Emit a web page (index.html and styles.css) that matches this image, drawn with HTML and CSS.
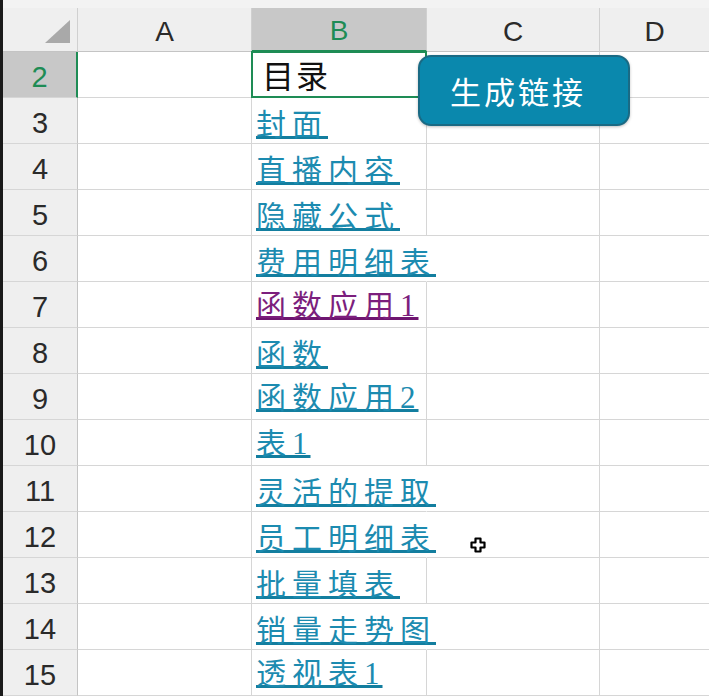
FILE: index.html
```html
<!DOCTYPE html>
<html lang="zh-CN">
<head>
  <meta charset="UTF-8">
  <meta name="viewport" content="width=device-width, initial-scale=1.0">
  <title>目录</title>
  <link rel="stylesheet" href="styles.css">
</head>
<body>
  <div class="sheet">
    <div class="top-strip"></div>

    <div class="grid">
      <!-- Column headers -->
      <div class="corner"><span class="corner-tri"></span></div>
      <div class="col-head">A</div>
      <div class="col-head active">B</div>
      <div class="col-head">C</div>
      <div class="col-head last">D</div>

      <!-- Row 2 -->
      <div class="row-head active">2</div>
      <div class="cell"></div>
      <div class="cell selected"><span class="title">目录</span></div>
      <div class="cell"></div>
      <div class="cell last"></div>

      <div class="row-head">3</div>
      <div class="cell"></div>
      <div class="cell"><a class="link" href="#">封面</a></div>
      <div class="cell"></div>
      <div class="cell last"></div>

      <div class="row-head">4</div>
      <div class="cell"></div>
      <div class="cell"><a class="link" href="#">直播内容</a></div>
      <div class="cell"></div>
      <div class="cell last"></div>

      <div class="row-head">5</div>
      <div class="cell"></div>
      <div class="cell"><a class="link" href="#">隐藏公式</a></div>
      <div class="cell"></div>
      <div class="cell last"></div>

      <div class="row-head">6</div>
      <div class="cell"></div>
      <div class="cell spill"><a class="link" href="#">费用明细表</a></div>
      <div class="cell"></div>
      <div class="cell last"></div>

      <div class="row-head">7</div>
      <div class="cell"></div>
      <div class="cell"><a class="link visited" href="#">函数应用<span class="num">1</span></a></div>
      <div class="cell"></div>
      <div class="cell last"></div>

      <div class="row-head">8</div>
      <div class="cell"></div>
      <div class="cell"><a class="link" href="#">函数</a></div>
      <div class="cell"></div>
      <div class="cell last"></div>

      <div class="row-head">9</div>
      <div class="cell"></div>
      <div class="cell"><a class="link" href="#">函数应用<span class="num">2</span></a></div>
      <div class="cell"></div>
      <div class="cell last"></div>

      <div class="row-head">10</div>
      <div class="cell"></div>
      <div class="cell"><a class="link" href="#">表<span class="num">1</span></a></div>
      <div class="cell"></div>
      <div class="cell last"></div>

      <div class="row-head">11</div>
      <div class="cell"></div>
      <div class="cell spill"><a class="link" href="#">灵活的提取</a></div>
      <div class="cell"></div>
      <div class="cell last"></div>

      <div class="row-head">12</div>
      <div class="cell"></div>
      <div class="cell spill"><a class="link" href="#">员工明细表</a></div>
      <div class="cell cursor-cell">
        <svg class="cursor" width="16" height="16" viewBox="0 0 16 16">
          <path d="M5.5 1.5h5v4h4v5h-4v4h-5v-4h-4v-5h4z" fill="#fff" stroke="#000" stroke-width="2.2" stroke-linejoin="round"/>
        </svg>
      </div>
      <div class="cell last"></div>

      <div class="row-head">13</div>
      <div class="cell"></div>
      <div class="cell"><a class="link" href="#">批量填表</a></div>
      <div class="cell"></div>
      <div class="cell last"></div>

      <div class="row-head">14</div>
      <div class="cell"></div>
      <div class="cell spill"><a class="link" href="#">销量走势图</a></div>
      <div class="cell"></div>
      <div class="cell last"></div>

      <div class="row-head">15</div>
      <div class="cell"></div>
      <div class="cell"><a class="link" href="#">透视表<span class="num">1</span></a></div>
      <div class="cell"></div>
      <div class="cell last"></div>
    </div>

    <!-- Floating button shape over the sheet -->
    <button class="make-links">生成链接</button>
  </div>
</body>
</html>
```

FILE: styles.css
```css
body {
  margin: 0;
  padding: 0;
  background: #fff;
  font-family: "Liberation Sans", Arial, sans-serif;
  overflow: hidden;
}

.sheet {
  position: relative;
  width: 709px;
  height: 696px;
  border-left: 3px solid #1a1a1a;
  box-sizing: border-box;
  overflow: hidden;
}

.top-strip {
  height: 8px;
  background: #f3f3f3;
}

.grid {
  display: grid;
  grid-template-columns: 75px 174px 175px 173px 109px;
  grid-template-rows: 44px repeat(14, 46px);
}

/* Header cells */
.corner,
.col-head {
  background: #efefef;
  border-right: 1px solid #d0d0d0;
  border-bottom: 1px solid #c4c4c4;
  box-sizing: border-box;
}

.corner {
  position: relative;
}

.corner-tri {
  position: absolute;
  left: 42px;
  top: 12px;
  width: 0;
  height: 0;
  border-left: 25px solid transparent;
  border-bottom: 23px solid #a9a9a9;
}

.col-head {
  display: flex;
  align-items: center;
  justify-content: center;
  padding-top: 4px;
  font-size: 28px;
  color: #2a2a2a;
}

.col-head.active {
  background: #c8c8c8;
  color: #1e8c55;
  border-bottom: 2px solid #1e8c55;
}

.col-head.last,
.cell.last {
  border-right: none;
}

.row-head {
  display: flex;
  align-items: center;
  justify-content: center;
  padding-top: 5px;
  background: #efefef;
  border-right: 1px solid #c4c4c4;
  border-bottom: 1px solid #d6d6d6;
  box-sizing: border-box;
  font-size: 29px;
  color: #2a2a2a;
}

.row-head.active {
  background: #c8c8c8;
  color: #1e8c55;
  border-right: 2px solid #1e8c55;
}

/* Body cells */
.cell {
  display: flex;
  align-items: flex-end;
  padding: 0 0 3px 4px;
  border-right: 1px solid #d6d6d6;
  border-bottom: 1px solid #d6d6d6;
  box-sizing: border-box;
  white-space: nowrap;
  overflow: visible;
  min-width: 0;
}

.cell.spill {
  border-right-color: transparent;
}

.cell.selected {
  border: 2px solid #1e8c55;
  margin: -1px 0 0 -1px;
  padding: 0 0 3px 9px;
  align-items: center;
}

.title {
  font-family: "Noto Sans CJK SC", sans-serif;
  font-size: 32px;
  letter-spacing: 2px;
  color: #111;
  padding-top: 2px;
}

.link {
  font-family: "Noto Sans CJK SC", sans-serif;
  font-size: 30px;
  line-height: 36px;
  letter-spacing: 6px;
  color: #1c8bb0;
  text-decoration: underline;
  text-decoration-thickness: 3px;
  text-underline-offset: 1px;
  text-decoration-color: #137e9f;
}

.link .num {
  font-family: "Liberation Serif", serif;
  font-size: 31px;
  letter-spacing: 3px;
}

.link.visited {
  color: #7c1f7d;
  text-decoration-color: #6e1570;
}

.cursor-cell {
  position: relative;
}

.cursor {
  position: absolute;
  left: 43px;
  top: 25px;
}

/* Button */
.make-links {
  position: absolute;
  left: 415px;
  top: 55px;
  width: 212px;
  height: 71px;
  background: #0a88ad;
  border: 2px solid #1a6a84;
  border-radius: 13px;
  box-shadow: 0 1px 3px rgba(0, 0, 0, 0.25);
  color: #fff;
  font-family: "Noto Sans CJK SC", sans-serif;
  font-size: 31px;
  letter-spacing: 3px;
  padding: 0 12px 0 0;
  cursor: pointer;
}
```
